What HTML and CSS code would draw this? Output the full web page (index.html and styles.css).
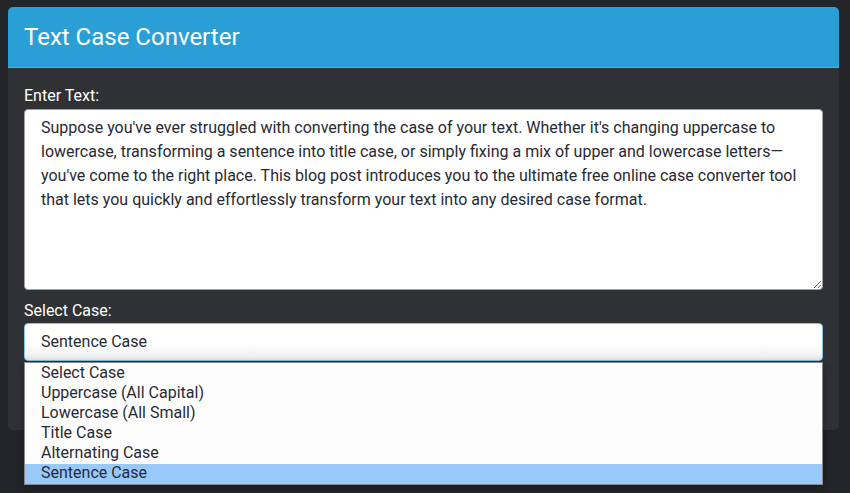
FILE: index.html
```html
<!DOCTYPE html>
<html lang="en">
<head>
<meta charset="utf-8">
<title>Text Case Converter</title>
<link rel="stylesheet" href="styles.css">
</head>
<body>
<div class="page">
  <div class="card">
    <div class="card-header"><h1 class="title">Text Case Converter</h1></div>
    <div class="card-body">
      <label class="label" for="txt">Enter Text:</label>
      <textarea id="txt" class="textarea">Suppose you've ever struggled with converting the case of your text. Whether it's changing uppercase to lowercase, transforming a sentence into title case, or simply fixing a mix of upper and lowercase letters—you've come to the right place. This blog post introduces you to the ultimate free online case converter tool that lets you quickly and effortlessly transform your text into any desired case format.</textarea>
      <div class="label label-select">Select Case:</div>
      <div class="select-wrap">
        <div class="select">Sentence Case</div>
        <ul class="dropdown">
          <li class="option">Select Case</li>
          <li class="option">Uppercase (All Capital)</li>
          <li class="option">Lowercase (All Small)</li>
          <li class="option">Title Case</li>
          <li class="option">Alternating Case</li>
          <li class="option selected">Sentence Case</li>
        </ul>
      </div>
    </div>
  </div>
</div>
</body>
</html>
```

FILE: styles.css
```css
html, body {
  margin: 0;
  padding: 0;
  background: #222428;
  font-family: Roboto, "Liberation Sans", sans-serif;
}
body {
  min-height: 493px;
}
.page {
  padding: 7px 11px 63px 8px;
}
.card {
  background: #303134;
  border-radius: 5px;
  height: 423px;
  position: relative;
  z-index: 1;
}
.card-header {
  background: #2a9fd6;
  border-radius: 5px 5px 0 0;
  height: 60px;
  border-bottom: 1px solid #4fb2e0;
  display: flex;
  align-items: center;
  padding: 0 16px;
}
.title {
  margin: 0;
  color: #ffffff;
  font-size: 24px;
  font-weight: 400;
  line-height: 30px;
}
.card-body {
  padding: 16px 16px 0 16px;
}
.label {
  display: block;
  color: #ffffff;
  font-size: 16px;
  font-weight: 400;
  line-height: 24px;
  margin-bottom: 1px;
}
.label-select {
  margin-top: 9px;
  margin-bottom: 0;
}
.textarea {
  display: block;
  box-sizing: border-box;
  width: 100%;
  height: 181px;
  margin: 0;
  padding: 6px 16px;
  border: 1px solid #a0a0a0;
  border-radius: 4px;
  background: #ffffff;
  color: #272a33;
  font-family: Roboto, "Liberation Sans", sans-serif;
  font-size: 16px;
  line-height: 24px;
  resize: vertical;
  outline: none;
}
.select-wrap {
  position: relative;
}
.select {
  box-sizing: border-box;
  height: 38px;
  padding: 0 16px;
  border: 1px solid #8cc4e4;
  border-radius: 4px;
  background: linear-gradient(#ffffff 0%, #ffffff 55%, #ececec 100%);
  color: #272a33;
  font-size: 16px;
  line-height: 36px;
}
.dropdown {
  position: absolute;
  top: 39px;
  left: 0;
  right: 0;
  margin: 0;
  padding: 1px 0 0 0;
  list-style: none;
  background: #fdfdfd;
  border: 1px solid #8a8a8a;
  box-shadow: 0 2px 8px rgba(0, 0, 0, 0.35);
  z-index: 10;
}
.option {
  height: 20px;
  line-height: 18px;
  padding: 0 16px;
  color: #272a33;
  font-size: 16px;
}
.option.selected {
  background: #99c8fb;
}
```
